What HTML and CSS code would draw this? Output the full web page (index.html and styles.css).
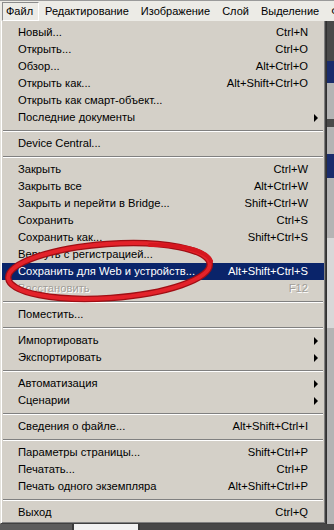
FILE: index.html
```html
<!DOCTYPE html>
<html lang="ru">
<head>
    <meta charset="UTF-8">
    <title>Файл</title>
    <link rel="stylesheet" href="styles.css">
</head>
<body>
<div class="app">
    <div class="menubar">
        <span class="top-item open">Файл</span>
        <span class="top-item">Редактирование</span>
        <span class="top-item">Изображение</span>
        <span class="top-item">Слой</span>
        <span class="top-item">Выделение</span>
        <span class="top-item">Ф</span>
    </div>

    <div class="main">
        <div class="menu">
            <div class="row"><span>Новый...</span><span>Ctrl+N</span><i></i></div>
            <div class="row"><span>Открыть...</span><span>Ctrl+O</span><i></i></div>
            <div class="row"><span>Обзор...</span><span>Alt+Ctrl+O</span><i></i></div>
            <div class="row"><span>Открыть как...</span><span>Alt+Shift+Ctrl+O</span><i></i></div>
            <div class="row"><span>Открыть как смарт-объект...</span><span></span><i></i></div>
            <div class="row"><span>Последние документы</span><span></span><i class="arrow"></i></div>
            <div class="sep"></div>
            <div class="row"><span>Device Central...</span><span></span><i></i></div>
            <div class="sep"></div>
            <div class="row"><span>Закрыть</span><span>Ctrl+W</span><i></i></div>
            <div class="row"><span>Закрыть все</span><span>Alt+Ctrl+W</span><i></i></div>
            <div class="row"><span>Закрыть и перейти в Bridge...</span><span>Shift+Ctrl+W</span><i></i></div>
            <div class="row"><span>Сохранить</span><span>Ctrl+S</span><i></i></div>
            <div class="row"><span>Сохранить как...</span><span>Shift+Ctrl+S</span><i></i></div>
            <div class="row"><span>Вернуть с регистрацией...</span><span></span><i></i></div>
            <div class="row active"><span>Сохранить для Web и устройств...</span><span>Alt+Shift+Ctrl+S</span><i></i></div>
            <div class="row disabled"><span>Восстановить</span><span>F12</span><i></i></div>
            <div class="sep"></div>
            <div class="row"><span>Поместить...</span><span></span><i></i></div>
            <div class="sep"></div>
            <div class="row"><span>Импортировать</span><span></span><i class="arrow"></i></div>
            <div class="row"><span>Экспортировать</span><span></span><i class="arrow"></i></div>
            <div class="sep"></div>
            <div class="row"><span>Автоматизация</span><span></span><i class="arrow"></i></div>
            <div class="row"><span>Сценарии</span><span></span><i class="arrow"></i></div>
            <div class="sep"></div>
            <div class="row"><span>Сведения о файле...</span><span>Alt+Shift+Ctrl+I</span><i></i></div>
            <div class="sep"></div>
            <div class="row"><span>Параметры страницы...</span><span>Shift+Ctrl+P</span><i></i></div>
            <div class="row"><span>Печатать...</span><span>Ctrl+P</span><i></i></div>
            <div class="row"><span>Печать одного экземпляра</span><span>Alt+Shift+Ctrl+P</span><i></i></div>
            <div class="sep"></div>
            <div class="row"><span>Выход</span><span>Ctrl+Q</span><i></i></div>
        </div>

        <div class="side">
            <div class="blk dark" style="height: 40px"></div>
            <div class="blk navy" style="height: 22px"></div>
            <div class="blk" style="height: 36px"></div>
            <div class="blk dark" style="height: 8px"></div>
            <div class="blk" style="height: 27px"></div>
            <div class="blk navy" style="height: 24px"></div>
            <div class="blk" style="height: 60px"></div>
            <div class="blk light" style="height: 90px"></div>
            <div class="blk" style="height: 196px"></div>
        </div>
    </div>

    <div class="bottom">
        <div class="b-left"></div>
        <div class="b-box"></div>
        <div class="b-right"></div>
    </div>

    <svg class="mark" width="334" height="530" viewBox="0 0 334 530">
        <ellipse cx="109" cy="271" rx="101" ry="27" transform="rotate(-4 109 271)"
                 fill="none" stroke="#a00e14" stroke-width="6.5"/>
        <ellipse cx="109" cy="271" rx="101" ry="27" transform="rotate(-4 109 271)"
                 fill="none" stroke="#e3222a" stroke-width="4"/>
        <path d="M150 245 C186 245 207 251 211 261" fill="none" stroke="#d5171f" stroke-width="4" stroke-linecap="round"/>
    </svg>
</div>
</body>
</html>
```

FILE: styles.css
```css
body {
    margin: 0;
    font-family: "Liberation Sans", Arial, sans-serif;
    font-size: 11.2px;
    color: #000;
    background-color: #6a6a6a;
}
.app {
    position: relative;
    width: 334px;
    height: 530px;
    overflow: hidden;
}
.menubar {
    display: flex;
    align-items: center;
    height: 21px;
    padding-left: 2px;
    background-color: #ecebe6;
    border-top: 1px solid #9a9a9a;
    box-sizing: border-box;
    white-space: nowrap;
}
.top-item {
    padding: 2px 5px 3px;
    border: 1px solid transparent;
    line-height: 12px;
    font-size: 11px;
}
.top-item.open {
    padding: 2px 5px 3px 3px;
    border-color: #8c8c8c #fff #fff #8c8c8c;
}
.main {
    display: flex;
    height: 503px;
}
.menu {
    width: 326px;
    flex: none;
    box-sizing: border-box;
    padding: 3px 1px 1px;
    background-color: #d4d0c8;
    border-left: 1px solid #e4e2dc;
    border-right: 1px solid #404040;
    border-bottom: 1px solid #404040;
    box-shadow: inset 1px 0 #fff, inset -1px -1px #808080;
}
.row {
    display: grid;
    grid-template-columns: 1fr auto 16px;
    align-items: center;
    height: 17px;
    padding-left: 16px;
    white-space: nowrap;
    line-height: 17px;
}
.row.active {
    background-color: #0a246a;
    color: #fff;
}
.row.disabled {
    color: #a19e98;
    text-shadow: 1px 1px #fff;
}
.arrow {
    justify-self: start;
    margin-left: 6px;
    width: 0;
    height: 0;
    border-left: 4px solid #000;
    border-top: 4px solid transparent;
    border-bottom: 4px solid transparent;
}
.sep {
    height: 9px;
    margin: 0 1px;
    display: flex;
    flex-direction: column;
    justify-content: center;
}
.sep::before {
    content: "";
    display: block;
    height: 1px;
    background-color: #808080;
    border-bottom: 1px solid #fff;
}
.side {
    flex: 1;
    display: flex;
    flex-direction: column;
    border-left: 1px solid #303030;
    background-color: #a9a9a9;
}
.blk {
    flex: none;
    background-color: #b4b4b4;
}
.blk.dark {
    background-color: #4a4a4a;
}
.blk.navy {
    background-color: #1a2c6c;
}
.blk.light {
    background-color: #d8d8d8;
}
.bottom {
    display: flex;
    height: 6px;
}
.b-left {
    width: 72px;
    background-color: #5c5c5c;
}
.b-box {
    width: 64px;
    background-color: #f2f2f2;
    border-left: 2px solid #3a3a3a;
    border-right: 2px solid #3a3a3a;
}
.b-right {
    flex: 1;
    background-color: #474747;
}
.mark {
    position: absolute;
    left: 0;
    top: 0;
    pointer-events: none;
}
```
